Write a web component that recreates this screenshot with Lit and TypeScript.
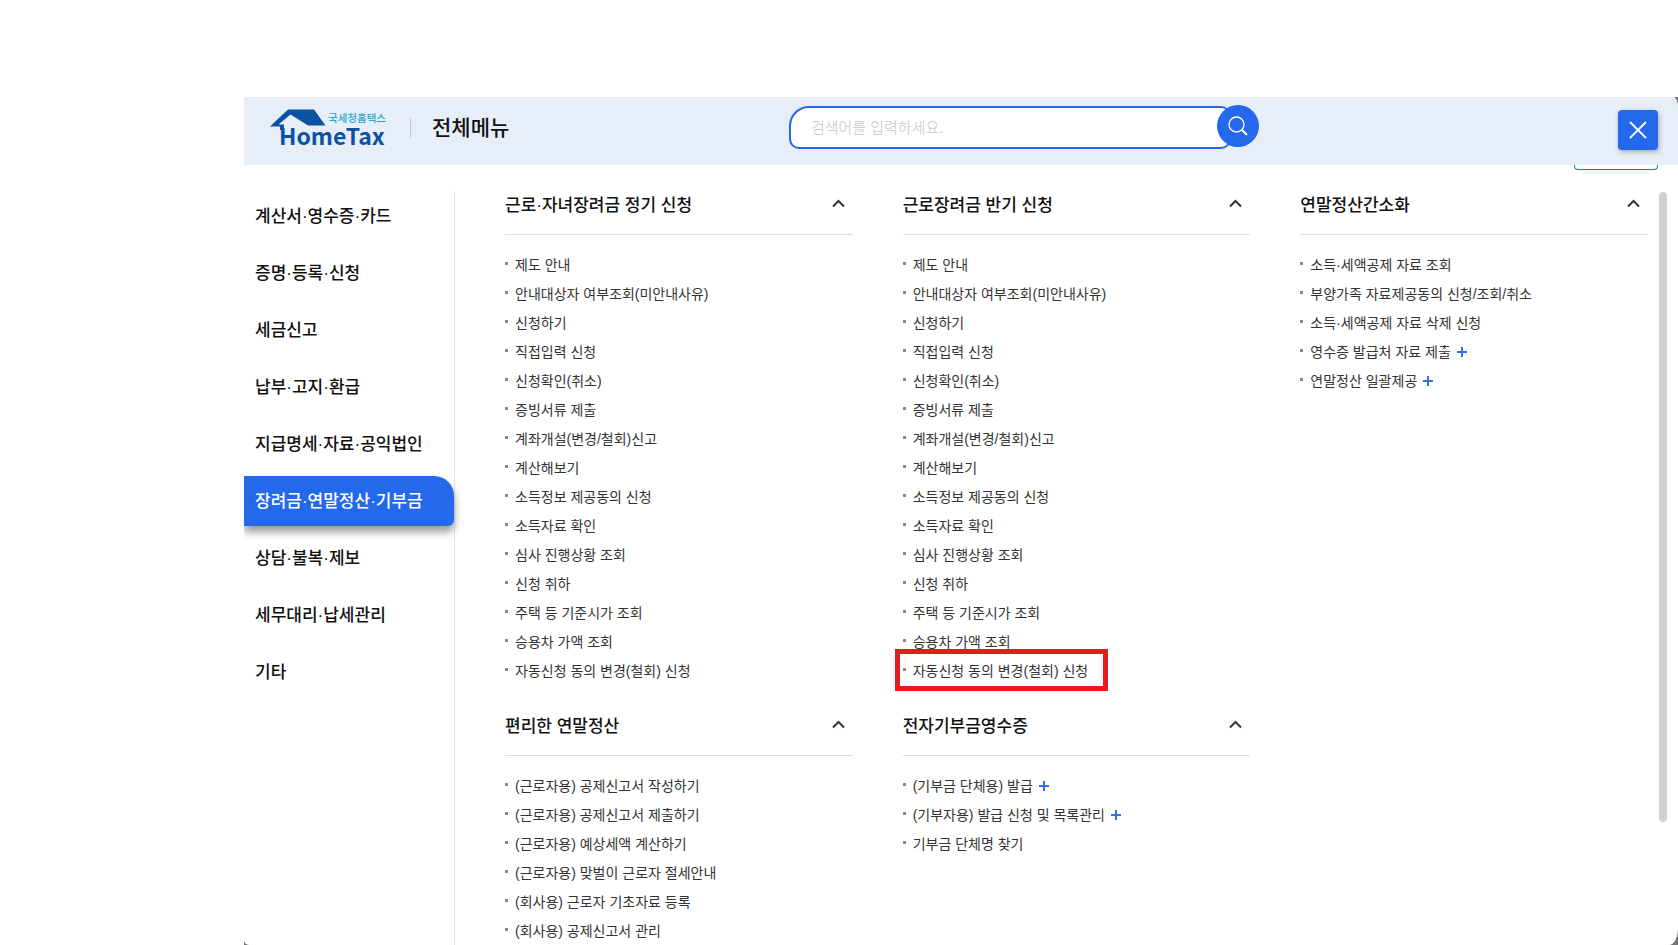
import { LitElement, html, css, svg, nothing } from "lit";
import { customElement, property, state } from "lit/decorators.js";
import { classMap } from "lit/directives/class-map.js";

interface Item {
  label: string;
  more?: boolean;
  marked?: boolean;
}

interface Section {
  title: string;
  items: Item[];
}

const CATEGORIES = [
  "계산서·영수증·카드",
  "증명·등록·신청",
  "세금신고",
  "납부·고지·환급",
  "지급명세·자료·공익법인",
  "장려금·연말정산·기부금",
  "상담·불복·제보",
  "세무대리·납세관리",
  "기타",
];

const GRANT_LABELS = [
  "제도 안내",
  "안내대상자 여부조회(미안내사유)",
  "신청하기",
  "직접입력 신청",
  "신청확인(취소)",
  "증빙서류 제출",
  "계좌개설(변경/철회)신고",
  "계산해보기",
  "소득정보 제공동의 신청",
  "소득자료 확인",
  "심사 진행상황 조회",
  "신청 취하",
  "주택 등 기준시가 조회",
  "승용차 가액 조회",
  "자동신청 동의 변경(철회) 신청",
];

const SECTIONS: Section[] = [
  { title: "근로·자녀장려금 정기 신청", items: GRANT_LABELS.map((label) => ({ label })) },
  {
    title: "근로장려금 반기 신청",
    items: GRANT_LABELS.map((label, i) => ({ label, marked: i === GRANT_LABELS.length - 1 })),
  },
  {
    title: "연말정산간소화",
    items: [
      { label: "소득·세액공제 자료 조회" },
      { label: "부양가족 자료제공동의 신청/조회/취소" },
      { label: "소득·세액공제 자료 삭제 신청" },
      { label: "영수증 발급처 자료 제출", more: true },
      { label: "연말정산 일괄제공", more: true },
    ],
  },
  {
    title: "편리한 연말정산",
    items: [
      { label: "(근로자용) 공제신고서 작성하기" },
      { label: "(근로자용) 공제신고서 제출하기" },
      { label: "(근로자용) 예상세액 계산하기" },
      { label: "(근로자용) 맞벌이 근로자 절세안내" },
      { label: "(회사용) 근로자 기초자료 등록" },
      { label: "(회사용) 공제신고서 관리" },
    ],
  },
  {
    title: "전자기부금영수증",
    items: [
      { label: "(기부금 단체용) 발급", more: true },
      { label: "(기부자용) 발급 신청 및 목록관리", more: true },
      { label: "기부금 단체명 찾기" },
    ],
  },
];

@customElement("menu-section")
class MenuSection extends LitElement {
  @property({ attribute: false }) section!: Section;
  @state() private open = true;

  static styles = css`
    :host {
      display: block;
    }
    .title {
      margin: 0;
      border-bottom: 1px solid #dddde6;
    }
    .toggle {
      display: flex;
      justify-content: space-between;
      align-items: center;
      width: 100%;
      height: 43px;
      padding: 0 8px 14px 0;
      border: 0;
      background: none;
      color: #111;
      font: inherit;
      font-size: 17px;
      font-weight: 500;
      line-height: 29px;
      text-align: left;
      cursor: pointer;
    }
    .chevron {
      width: 13px;
      height: 9px;
      margin-bottom: 4px;
    }
    .closed .chevron {
      transform: rotate(180deg);
    }
    .list {
      margin: 0;
      padding: 16px 0 0;
      list-style: none;
    }
    .item {
      display: flex;
      align-items: center;
      height: 29px;
    }
    .link {
      position: relative;
      display: inline-flex;
      align-items: center;
      color: #333;
      font-size: 14px;
      line-height: 29px;
      white-space: nowrap;
      text-decoration: none;
    }
    .link::before {
      content: "";
      width: 3px;
      height: 3px;
      margin: 0 7px 4px 0;
      background: #888;
    }
    .plus {
      width: 10px;
      height: 10px;
      margin: 0 0 2px 6px;
    }
    .marked::after {
      content: "";
      position: absolute;
      inset: -8px -20px -5px -8px;
      border: 5px solid #e81b1b;
    }
  `;

  render() {
    return html`
      <h2 class=${classMap({ title: true, closed: !this.open })}>
        <button class="toggle" aria-expanded=${this.open} @click=${() => (this.open = !this.open)}>
          ${this.section.title}
          <svg class="chevron" viewBox="0 0 13 9" aria-hidden="true">
            <path d="M1 7.5 6.5 2 12 7.5" fill="none" stroke="#333" stroke-width="2" />
          </svg>
        </button>
      </h2>
      ${this.open
        ? html`<ul class="list">
            ${this.section.items.map(
              (item) => html`<li class="item">
                <a class=${classMap({ link: true, marked: !!item.marked })} href="#"
                  >${item.label}${item.more
                    ? html`<svg class="plus" viewBox="0 0 10 10" aria-hidden="true">
                        <path d="M5 0V10M0 5H10" stroke="#2f70ee" stroke-width="2" />
                      </svg>`
                    : nothing}</a
                >
              </li>`
            )}
          </ul>`
        : nothing}
    `;
  }
}

@customElement("app-root")
class AppRoot extends LitElement {
  @state() private active = 5;

  static styles = css`
    :host {
      display: block;
      box-sizing: border-box;
      height: 100vh;
      padding: 97px 0 0 244px;
      overflow: hidden;
      background: #fff;
      font-family: "Liberation Sans", "Noto Sans CJK KR", sans-serif;
    }
    * {
      box-sizing: border-box;
    }
    .backdrop {
      height: 100%;
      background: #747474;
    }
    .dialog {
      display: flex;
      flex-direction: column;
      height: 100%;
      overflow: hidden;
      background: #fff;
      border-radius: 0 5px 9px 5px / 0 11px 16px 5px;
    }
    .header {
      display: grid;
      grid-template-columns: 38% 470px 1fr;
      flex: none;
      height: 68px;
      background: #e8eef8;
    }
    .brand {
      display: flex;
      align-items: center;
      padding: 0 0 6px 26px;
    }
    .logo {
      display: block;
      width: 117px;
      height: 38px;
      overflow: visible;
    }
    .title {
      margin: 0 0 0 23px;
      padding-left: 21px;
      border-left: 1px solid #c4c8d0;
      color: #111;
      font-size: 21px;
      font-weight: 500;
      line-height: 20px;
    }
    .search {
      display: flex;
      align-items: center;
      padding-bottom: 8px;
    }
    .field {
      flex: 1;
      min-width: 0;
      height: 43px;
      margin-right: -14px;
      padding: 0 20px;
      border: 2px solid #2468ec;
      border-radius: 20px 10px 10px 10px;
      outline: 0;
      background: #fff;
      color: #222;
      font: inherit;
      font-size: 15px;
      font-weight: 300;
    }
    .field::placeholder {
      color: #c4c4c4;
      opacity: 1;
    }
    .go {
      position: relative;
      flex: none;
      width: 42px;
      height: 42px;
      margin-bottom: 2px;
      padding: 0;
      border: 0;
      border-radius: 50%;
      background: #2468ec;
    }
    .go svg,
    .close svg {
      display: block;
      margin: auto;
    }
    .tools {
      display: flex;
      align-items: center;
      justify-content: flex-end;
      padding: 0 20px 2px 0;
    }
    .close {
      width: 40px;
      height: 40px;
      padding: 0;
      border: 0;
      border-radius: 4px;
      background: #2468ec;
      box-shadow: 1px 2px 5px rgba(0, 0, 0, 0.3);
    }
    .stub {
      flex: none;
      align-self: flex-end;
      width: 84px;
      height: 5px;
      margin: 0 20px 21px 0;
      border: 1px solid #2468ec;
      border-top: 0;
      border-radius: 0 0 4px 4px;
    }
    .body {
      display: flex;
      flex: 1;
      min-height: 0;
    }
    .nav {
      display: flex;
      flex-direction: column;
      flex: none;
      gap: 7px;
      width: 211px;
      border-right: 1px solid #e4e0fb;
    }
    .category {
      flex: none;
      height: 50px;
      padding: 0 0 4px 11px;
      border: 0;
      background: none;
      color: #111;
      font: inherit;
      font-size: 17px;
      font-weight: 500;
      text-align: left;
      white-space: nowrap;
      cursor: pointer;
    }
    .selected {
      border-radius: 0 20px 6px 0;
      background: #2468ec;
      box-shadow: 0 6px 8px rgba(0, 0, 0, 0.4);
      color: #fff;
    }
    .sections {
      display: grid;
      grid-template-columns: repeat(3, 1fr);
      align-content: start;
      flex: 1;
      gap: 26px 50px;
      min-width: 0;
      padding: 0 11px 0 50px;
    }
    .scrollbar {
      flex: none;
      width: 8px;
      height: 83.5%;
      margin: 1px 11px 0 0;
      border-radius: 4px;
      background: #d1d1d1;
    }
  `;

  private logo() {
    return svg`<svg class="logo" viewBox="0 0 117 38" role="img" aria-label="국세청홈택스 HomeTax">
      <path d="M0 17.500 18 .5H44L55.500 16.500H38L20.500 5.500 8.500 15.500H14V21H10V17.500Z" fill="#0b52a5" />
      <text x="58" y="12.500" font-size="10.500" font-weight="500" fill="#27a9c8">국세청홈택스</text>
      <text x="9" y="36" font-family="Noto Sans CJK KR" font-size="23" font-weight="700" fill="#0b52a5">HomeTax</text>
    </svg>`;
  }

  render() {
    return html`
      <div class="backdrop">
        <main class="dialog">
          <header class="header">
            <div class="brand">
              ${this.logo()}
              <h1 class="title">전체메뉴</h1>
            </div>
            <form class="search" role="search" @submit=${(e: Event) => e.preventDefault()}>
              <input class="field" type="text" aria-label="검색어" placeholder="검색어를 입력하세요." />
              <button class="go" aria-label="검색">
                <svg width="20" height="20" viewBox="0 0 20 20" fill="none" stroke="#fff">
                  <circle cx="8.500" cy="8.500" r="7.500" stroke-width="1.300" />
                  <path d="M14 14 19 19" stroke-width="2" />
                </svg>
              </button>
            </form>
            <div class="tools">
              <button class="close" aria-label="닫기">
                <svg width="18" height="18" viewBox="0 0 18 18" fill="none" stroke="#fff" stroke-width="1.800">
                  <path d="M1 1 17 17M17 1 1 17" />
                </svg>
              </button>
            </div>
          </header>
          <div class="stub"></div>
          <div class="body">
            <nav class="nav">
              ${CATEGORIES.map(
                (name, i) => html`<button
                  class=${classMap({ category: true, selected: i === this.active })}
                  @click=${() => (this.active = i)}
                >
                  ${name}
                </button>`
              )}
            </nav>
            <div class="sections">
              ${SECTIONS.map((section) => html`<menu-section .section=${section}></menu-section>`)}
            </div>
            <div class="scrollbar"></div>
          </div>
        </main>
      </div>
    `;
  }
}
